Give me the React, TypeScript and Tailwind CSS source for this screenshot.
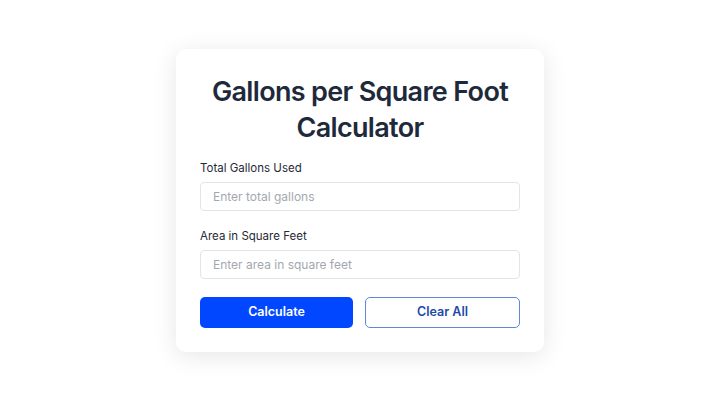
import React, { useState } from "react"

export default function App() {
  const [gallons, setGallons] = useState("")
  const [area, setArea] = useState("")

  return (
    <div
      className="flex h-[405px] w-[720px] items-start justify-center bg-white pt-[49px]"
      style={{ fontFamily: "Inter, 'Noto Sans', sans-serif" }}
    >
      <div className="w-[368px] rounded-[10px] bg-white px-6 pb-6 pt-[25px] shadow-[0_4px_24px_rgba(0,0,0,0.10)]">
        <h1 className="text-center text-[27px] font-semibold leading-[36px] tracking-[-0.025em] text-[#1e2a3b]">
          Gallons per Square Foot Calculator
        </h1>

        <label className="mt-[14px] block text-[11.5px] leading-4 text-[#1f2937]">Total Gallons Used</label>
        <input
          value={gallons}
          onChange={(e) => setGallons(e.target.value)}
          placeholder="Enter total gallons"
          className="mt-[6px] block h-[29px] w-full rounded-[4px] border border-[#e2e4e8] px-3 text-[12px] text-[#1f2937] outline-none placeholder:text-[#a3a8b0]"
        />

        <label className="mt-[17px] block text-[11.5px] leading-4 text-[#1f2937]">Area in Square Feet</label>
        <input
          value={area}
          onChange={(e) => setArea(e.target.value)}
          placeholder="Enter area in square feet"
          className="mt-[6px] block h-[29px] w-full rounded-[4px] border border-[#e2e4e8] px-3 text-[12px] text-[#1f2937] outline-none placeholder:text-[#a3a8b0]"
        />

        <div className="mt-[18px] flex gap-3">
          <button className="h-[31px] flex-1 rounded-[5px] bg-[#0047ff] text-[12.5px] font-semibold text-white">
            Calculate
          </button>
          <button
            onClick={() => {
              setGallons("")
              setArea("")
            }}
            className="h-[31px] flex-1 rounded-[5px] border border-[#5f89d4] bg-white text-[12.5px] font-semibold text-[#1d4aa8]"
          >
            Clear All
          </button>
        </div>
      </div>
    </div>
  )
}
